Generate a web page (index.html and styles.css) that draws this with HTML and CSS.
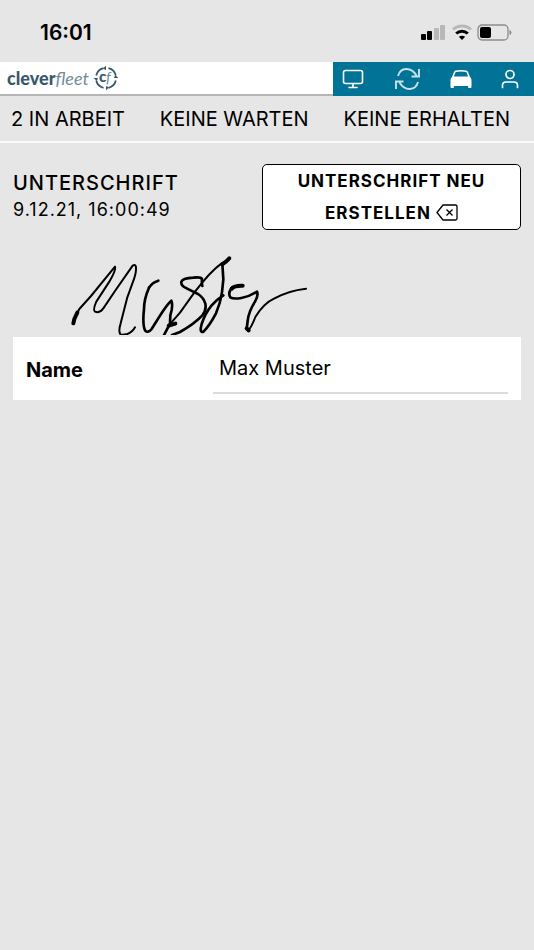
FILE: index.html
```html
<!DOCTYPE html>
<html lang="de">
<head>
    <meta charset="utf-8">
    <meta name="viewport" content="width=device-width, initial-scale=1">
    <title>cleverfleet</title>
    <link rel="stylesheet" href="styles.css">
</head>
<body>
    <div class="status-bar">
        <span class="time">16:01</span>
        <div class="status-icons">
            <svg width="26" height="16" viewBox="0 0 26 16">
                <rect x="0" y="10" width="5" height="6" rx="1"/>
                <rect x="6" y="7" width="5" height="9" rx="1"/>
                <rect x="13" y="4" width="5" height="12" rx="1" fill="#b8b8b8"/>
                <rect x="19" y="1" width="5" height="15" rx="1" fill="#b8b8b8"/>
            </svg>
            <svg width="20" height="16" viewBox="0 0 20 16" fill="none" stroke-width="3">
                <path d="M1 5.5C6 .7 14 .7 19 5.5" stroke="#b8b8b8"/>
                <path d="M4.2 9.500C7.500 6.500 12.500 6.500 15.800 9.500" stroke="#000"/>
                <path d="M10 16L6.800 12.800Q10 10.800 13.200 12.800Z" fill="#000"/>
            </svg>
            <svg width="36" height="17" viewBox="0 0 36 17">
                <rect x="1" y="1" width="30" height="15" rx="4" fill="none" stroke="#8c8c8c" stroke-width="1.300"/>
                <rect x="3" y="3" width="11" height="11" rx="2"/>
                <path d="M32.500 6Q34.500 6.500 34.500 8.500T32.500 11Z" fill="#8c8c8c"/>
            </svg>
        </div>
    </div>

    <header class="app-bar">
        <a class="logo" href="#">
            <b>clever</b><i>fleet</i>
            <svg width="26" height="26" viewBox="0 0 26 26" fill="none" stroke="#37586c" stroke-width="1.800">
                <path d="M15.500 3.200A10 10 0 0 1 22.800 10.500M22.800 15.500A10 10 0 0 1 15.500 22.800M10.500 22.800A10 10 0 0 1 3.200 15.500M3.200 10.500A10 10 0 0 1 10.500 3.200"/>
                <path d="M13 .5V5L10 3.800ZM25.500 13H21L22.200 10ZM13 25.500V21L16 22.200ZM.5 13H5L3.800 16Z" fill="#37586c" stroke="none"/>
                <text class="mark-c" x="6" y="17">c</text>
                <text class="mark-f" x="13" y="18">f</text>
            </svg>
        </a>
        <nav class="toolbar">
            <button type="button" aria-label="Bildschirm">
                <svg width="22" height="22" viewBox="0 0 22 22" fill="none" stroke="#fff" stroke-width="1.600" stroke-linecap="round">
                    <rect x="1.500" y="2.500" width="19" height="13" rx="2"/>
                    <path d="M11 16V19M7 19.500H15"/>
                </svg>
            </button>
            <button type="button" aria-label="Aktualisieren">
                <svg width="28" height="24" viewBox="0 0 28 24" fill="none" stroke="#c9e2ea" stroke-width="1.900">
                    <path d="M5 9C7.500 0 18 -.5 23.500 8.500M26 2V9.500H18.500M25 15C22.500 24 12 24.500 6.500 15.500M3 22V14.500H10.500"/>
                </svg>
            </button>
            <button type="button" aria-label="Fahrzeug">
                <svg width="22" height="20" viewBox="0 0 22 20" fill="#fff">
                    <path fill-rule="evenodd" d="M5.500 1.500Q11 .5 16.500 1.500Q17.500 1.800 18 3L20 8Q21.500 9 21.500 11V18Q21.500 19 20.500 19H19Q18 19 18 18V17H4V18Q4 19 3 19H1.500Q.5 19 .5 18V11Q.5 9 2 8L4 3Q4.500 1.800 5.500 1.500ZM5.700 2.900L3.800 7.500H18.200L16.300 2.900Q11 2 5.700 2.900Z"/>
                </svg>
            </button>
            <button type="button" aria-label="Benutzer">
                <svg width="18" height="20" viewBox="0 0 18 20" fill="none" stroke="#fff" stroke-width="1.700" stroke-linecap="round">
                    <circle cx="9" cy="5.500" r="4"/>
                    <path d="M1.500 18.500V16.500Q1.500 13 5 13H13Q16.500 13 16.500 16.500V18.500"/>
                </svg>
            </button>
        </nav>
    </header>

    <nav class="tabs">
        <a href="#">2 IN ARBEIT</a>
        <a href="#">KEINE WARTEN</a>
        <a href="#">KEINE ERHALTEN</a>
    </nav>

    <main>
        <div class="signature-header">
            <div>
                <h1>UNTERSCHRIFT</h1>
                <time datetime="2021-12-09T16:00:49">9.12.21, 16:00:49</time>
            </div>
            <button type="button" class="reset">UNTERSCHRIFT NEU ERSTELLEN
                <svg width="22" height="17" viewBox="0 0 22 17" fill="none" stroke="#000" stroke-width="1.300" stroke-linejoin="round">
                    <path d="M7 1H19.500Q21 1 21 2.500V14.500Q21 16 19.500 16H7L1 8.500Z"/>
                    <path d="M10.500 5.500L16.500 11.500M16.500 5.500L10.500 11.500"/>
                </svg>
            </button>
        </div>

        <svg class="signature" viewBox="0 0 921 270" role="img" aria-label="Unterschrift Muster">
            <g transform="translate(141 0)">
                <path class="thick" d="M40 235L43 222L52 203"/>
                <path d="M46 215L58 192L93 153L165 65C169 75 155 98 148 110L109 170Q98 195 105 200Q120 206 130 190L165 138L218 62Q229 56 228 72Q228 88 218 113L202 157L182 235Q174 260 182 269Q190 270 202 267Q217 262 225 247"/>
                <path class="bold" d="M295 107Q277 112 267 128"/>
                <path class="bold" d="M267 128Q252 162 252 192Q247 238 255 256Q264 266 275 252L300 212Q321 178 334 167Q340 182 331 211L330 236L312 270"/>
                <path class="thick" d="M326 242L346 236"/>
            </g>
            <g transform="translate(501 0)">
                <path d="M-34 242L0 203L45 140Q92 78 125 55L148 42"/>
                <path class="bold" d="M67 123Q65 113 66 102Q62 95 40 98Q8 100 4 110Q2 122 20 130L54 147Q71 158 76 176Q80 195 67 211Q45 235 0 261L-24 270"/>
                <path class="thick" d="M127 58Q138 52 148 40"/>
                <path class="bold" d="M127 56L130 103L126 142Q121 175 108 205Q88 243 70 260Q57 265 65 237Q75 205 95 181Q112 162 130 151"/>
                <path class="thick" d="M188 122Q163 121 155 131"/>
                <path class="bold" d="M158 127Q142 142 151 157Q160 163 184 159Q208 155 231 140Q236 151 225 170Q205 202 203 228L200 252"/>
                <path class="thick" d="M200 250L206 256"/>
                <path d="M204 258Q216 243 226 216Q251 175 282 161Q324 137 378 131"/>
            </g>
        </svg>

        <form class="name-row">
            <label for="name">Name</label>
            <input type="text" id="name" value="Max Muster">
        </form>
    </main>
</body>
</html>
```
FILE: styles.css
```css
* {
    box-sizing: border-box;
}
body {
    margin: 0;
    font-family: Inter, "Liberation Sans", sans-serif;
    font-size: 20px;
    color: #000;
    background: #e6e6e6;
}
button {
    font: inherit;
    color: inherit;
    cursor: pointer;
}
a {
    color: inherit;
    text-decoration: none;
}
svg {
    display: block;
}
.status-bar {
    display: flex;
    align-items: center;
    justify-content: space-between;
    height: 62px;
    padding: 2px 21px 0 40px;
}
.time {
    font-size: 21px;
    font-weight: 600;
}
.status-icons {
    display: flex;
    align-items: center;
    gap: 5px;
}
.app-bar {
    display: flex;
    height: 34px;
    background: #fff;
}
.logo {
    flex: 1;
    display: flex;
    align-items: center;
    padding-left: 7px;
    border-bottom: 2px solid #b5b5b5;
    font-family: Lato, sans-serif;
    font-size: 18px;
    line-height: 30px;
    color: #37586c;
}
.logo b {
    font-weight: 900;
}
.logo i {
    font-weight: 400;
    color: #748c9a;
}
.logo svg {
    margin-left: 4px;
}
.mark-c, .mark-f {
    fill: #37586c;
    stroke: none;
    font-size: 15px;
    font-weight: 900;
}
.mark-f {
    fill: #748c9a;
    font-style: italic;
    font-weight: 400;
}
.toolbar {
    display: flex;
    align-items: center;
    justify-content: space-between;
    width: 201px;
    padding: 0 15px 0 9px;
    background: #007397;
}
.toolbar button {
    padding: 0;
    border: 0;
    background: none;
}
.tabs {
    display: flex;
    justify-content: space-between;
    padding: 1px 24px 0 11px;
    border-bottom: 2px solid #fafafa;
    line-height: 44px;
    white-space: nowrap;
}
main {
    padding: 21px 13px;
}
.signature-header {
    display: flex;
    align-items: center;
    justify-content: space-between;
}
h1 {
    margin: 0;
    font-size: 20px;
    font-weight: 500;
    line-height: 26px;
    letter-spacing: 1px;
}
time {
    display: block;
    font-size: 18px;
    line-height: 28px;
    letter-spacing: 1px;
}
.reset {
    width: 51%;
    padding: 0 24px;
    border: 1px solid #000;
    border-radius: 5px;
    background: #fff;
    font-size: 17px;
    font-weight: 700;
    line-height: 32px;
    letter-spacing: 1px;
}
.reset svg {
    display: inline-block;
    vertical-align: -2px;
}
.signature {
    width: 307px;
    margin-top: 15px;
    fill: none;
    stroke: #000;
    stroke-width: 6;
    stroke-linecap: round;
    stroke-linejoin: round;
}
.bold {
    stroke-width: 8;
}
.thick {
    stroke-width: 12;
}
.name-row {
    display: flex;
    align-items: center;
    margin-top: 2px;
    padding: 0 13px 6px;
    background: #fff;
}
.name-row label {
    width: 187px;
    padding-top: 8px;
    font-weight: 700;
}
.name-row input {
    flex: 1;
    min-width: 0;
    height: 57px;
    padding: 6px 6px 0;
    border: 0;
    border-bottom: 2px solid #dcdcdc;
    border-radius: 0;
    outline: 0;
    background: none;
    font: inherit;
}
```
